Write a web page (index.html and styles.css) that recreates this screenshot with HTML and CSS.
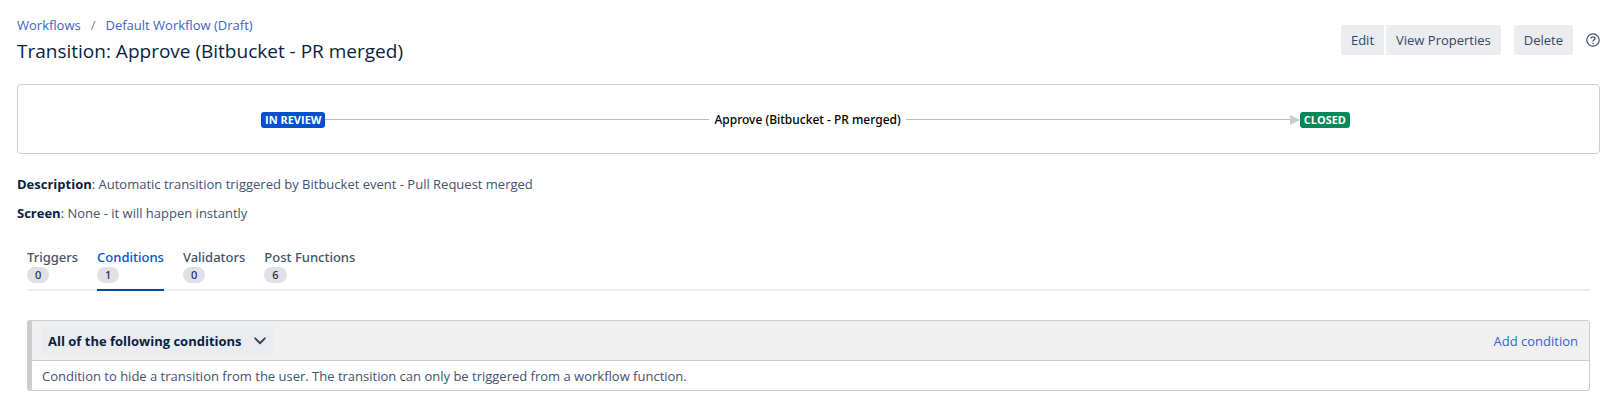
FILE: index.html
```html
<!DOCTYPE html>
<html lang="en">
<head>
    <meta charset="UTF-8">
    <meta name="viewport" content="width=device-width, initial-scale=1.0">
    <title>Transition: Approve (Bitbucket - PR merged)</title>
    <link rel="stylesheet" href="styles.css">
</head>
<body>
    <div class="page">
        <header class="page-header">
            <div class="page-title">
                <nav class="breadcrumbs" aria-label="Breadcrumbs">
                    <a href="#">Workflows</a>
                    <span class="separator">/</span>
                    <a href="#">Default Workflow (Draft)</a>
                </nav>
                <h1>Transition: Approve (Bitbucket - PR merged)</h1>
            </div>
            <div class="page-actions">
                <div class="btn-group">
                    <button type="button" class="btn btn-first">Edit</button>
                    <button type="button" class="btn btn-last">View Properties</button>
                </div>
                <button type="button" class="btn">Delete</button>
                <a class="help" href="#" aria-label="Help">
                    <svg width="14" height="14" viewBox="0 0 14 14" fill="none" stroke="#42526e">
                        <circle cx="7" cy="7" r="6.2" stroke-width="1.2"/>
                        <path d="M5 5.600C5 4.400 5.800 3.800 7 3.800s2 .7 2 1.700c0 1.300-2 1.400-2 3" stroke-width="1.300"/>
                        <circle cx="7" cy="10.200" r=".8" fill="#42526e" stroke="none"/>
                    </svg>
                </a>
            </div>
        </header>

        <div class="diagram">
            <span class="status status-review">IN REVIEW</span>
            <span class="line"></span>
            <span class="transition-name">Approve (Bitbucket - PR merged)</span>
            <span class="line"></span>
            <span class="arrow"></span>
            <span class="status status-closed">CLOSED</span>
        </div>

        <p class="detail"><strong>Description</strong>: Automatic transition triggered by Bitbucket event - Pull Request merged</p>
        <p class="detail"><strong>Screen</strong>: None - it will happen instantly</p>

        <div class="details-pane">
            <nav class="tabs">
                <a class="tab" href="#">Triggers <span class="badge">0</span></a>
                <a class="tab active" href="#">Conditions <span class="badge">1</span></a>
                <a class="tab" href="#">Validators <span class="badge">0</span></a>
                <a class="tab" href="#">Post Functions <span class="badge">6</span></a>
            </nav>

            <section class="conditions">
                <div class="conditions-header">
                    <div class="dropdown">
                        <select class="dropdown-select" aria-label="Conditions to match">
                            <option>All of the following conditions</option>
                        </select>
                        <svg class="chevron" width="12" height="8" viewBox="0 0 12 8" fill="none" stroke="#344563" stroke-width="2" stroke-linecap="round" stroke-linejoin="round">
                            <path d="M1.200 1.400L6 6.200l4.800-4.800"/>
                        </svg>
                    </div>
                    <a class="add-link" href="#">Add condition</a>
                </div>
                <div class="condition">Condition to hide a transition from the user. The transition can only be triggered from a workflow function.</div>
            </section>
        </div>
    </div>
</body>
</html>
```
FILE: styles.css
```css
* {
    box-sizing: border-box;
}

body {
    margin: 0;
    background: #fff;
    color: #42526e;
    font-family: "Open Sans", "Noto Sans", sans-serif;
    font-size: 13px;
    line-height: 20px;
}

a {
    color: #3b5fcc;
    text-decoration: none;
}

a:hover {
    text-decoration: underline;
}

.page {
    padding: 15px 0 0 17px;
}

.page-header {
    display: flex;
    justify-content: space-between;
    align-items: center;
    margin-bottom: 19px;
}

.breadcrumbs {
    display: flex;
    gap: 10px;
}

.separator {
    color: #7a869a;
}

h1 {
    margin: 2px 0 0;
    color: #091e42;
    font-size: 19px;
    font-weight: 400;
    line-height: 28px;
}

.page-actions {
    display: flex;
    align-items: center;
    gap: 13px;
}

.btn-group {
    display: flex;
    gap: 2px;
}

.btn {
    height: 30px;
    padding: 0 10px;
    border: 0;
    border-radius: 3px;
    background: #ebecf0;
    color: #344563;
    font: inherit;
    cursor: pointer;
}

.btn-first {
    border-radius: 3px 0 0 3px;
}

.btn-last {
    border-radius: 0 3px 3px 0;
}

.help {
    display: flex;
}

.diagram {
    display: flex;
    align-items: center;
    height: 70px;
    margin-bottom: 20px;
    padding: 1px 249px 0 243px;
    border: 1px solid #ccc;
    border-radius: 4px;
}

.status {
    padding: 0 4px;
    border-radius: 3px;
    color: #fff;
    font-size: 11px;
    font-weight: 700;
    line-height: 16px;
}

.status-review {
    background: #0052cc;
}

.status-closed {
    background: #00875a;
}

.line {
    flex: 1;
    height: 1px;
    background: #bbb;
}

.transition-name {
    padding: 0 5px;
    color: #000;
    font-family: "Noto Sans", "Open Sans", sans-serif;
    font-size: 12px;
    font-weight: 500;
}

.arrow {
    border: 5px solid transparent;
    border-left: 10px solid #ccc;
    border-right: 0;
}

.detail {
    margin: 0 0 9px;
}

.detail strong {
    color: #091e42;
}

.details-pane {
    padding: 15px 10px 0;
}

.tabs {
    display: flex;
    gap: 19px;
    margin-bottom: 29px;
    border-bottom: 2px solid #ebecf0;
}

.tab {
    display: flex;
    flex-direction: column;
    align-items: flex-start;
    margin-bottom: -2px;
    padding-bottom: 6px;
    border-bottom: 2px solid transparent;
    color: #42526e;
    font-family: "Noto Sans", "Open Sans", sans-serif;
    font-weight: 500;
}

.tab.active {
    border-color: #0747a6;
    color: #0052cc;
}

.badge {
    padding: 0 8px;
    border-radius: 8px;
    background: #dfe1e6;
    color: #172b4d;
    font-size: 11px;
    line-height: 16px;
}

.conditions {
    border: 1px solid #ccc;
    border-left-width: 5px;
    border-radius: 3px;
}

.conditions-header {
    display: flex;
    justify-content: space-between;
    align-items: center;
    height: 40px;
    padding: 0 11px 0 10px;
    border-bottom: 1px solid #ccc;
    background: #f0f0f0;
}

.dropdown {
    position: relative;
}

.dropdown-select {
    height: 29px;
    padding: 0 32px 0 6px;
    border: 0;
    border-radius: 3px;
    background: #ebecf0;
    color: #091e42;
    font: inherit;
    font-weight: 700;
    appearance: none;
    cursor: pointer;
}

.chevron {
    position: absolute;
    top: 11px;
    right: 8px;
    pointer-events: none;
}

.condition {
    padding: 5px 10px 4px;
}
```
